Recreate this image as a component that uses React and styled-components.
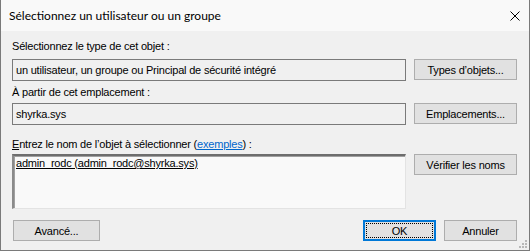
import React from "react";
import styled, { createGlobalStyle } from "styled-components";

const Global = createGlobalStyle`
  html, body { margin: 0; padding: 0; background: #f0f0f0; }
  * { box-sizing: border-box; }
`;

const Window = styled.div`
  width: 530px;
  height: 251px;
  display: flex;
  flex-direction: column;
  border: 1px solid #7a7a7a;
  border-top: none;
  background: #f0f0f0;
  position: relative;
  font-family: "Liberation Sans", Arial, sans-serif;
  font-size: 11px;
  letter-spacing: -0.2px;
  color: #000;
`;

const TitleBar = styled.div`
  height: 31px;
  flex: none;
  display: flex;
  align-items: center;
  justify-content: space-between;
  padding: 0 9px 0 8px;
  background: #f9f9f9;
  font-family: Lato, "Segoe UI", sans-serif;
  font-size: 12px;
  letter-spacing: 0;
`;

const Close = styled.svg`
  width: 10px;
  height: 10px;
`;

const Body = styled.div`
  flex: 1;
  display: grid;
  grid-template-columns: 394px 103px;
  column-gap: 8px;
  padding: 9px 11px 0 11px;
  align-content: start;
`;

const Label = styled.div`
  grid-column: 1 / 3;
  height: ${(p) => p.$h}px;
  line-height: 13px;
  padding-top: ${(p) => p.$top || 0}px;
`;

const Field = styled.div`
  height: 22px;
  border: 1px solid #7a7a7a;
  background: #f0f0f0;
  padding: 0 3px;
  line-height: 20px;
  white-space: nowrap;
  overflow: hidden;
`;

const Names = styled.div`
  height: 55px;
  border-style: solid;
  border-width: 2px 1px 1px 2px;
  border-color: #6d6d6d #e3e3e3 #e3e3e3 #8a8a8a;
  box-shadow: inset 1px 1px 0 #a0a0a0;
  background: #f9f9f9;
  padding: 1px 2px;
  line-height: 13px;
`;

const Resolved = styled.span`
  text-decoration: underline;
`;

const Button = styled.button`
  height: 21px;
  width: ${(p) => p.$w || 103}px;
  margin-left: ${(p) => p.$ml || 0}px;
  border: 1px solid #adadad;
  background: #e1e1e1;
  font-family: "Liberation Sans", Arial, sans-serif;
  font-size: 11px;
  letter-spacing: -0.2px;
  color: #000;
  padding: 0;
  align-self: start;
  position: relative;
  ${(p) =>
    p.$default &&
    `
    border: 2px solid #0078d7;
    &::after {
      content: "";
      position: absolute;
      inset: 1px;
      border: 1px dotted #000;
    }
  `}
`;

const Footer = styled.div`
  grid-column: 1 / 3;
  display: flex;
  align-items: center;
  padding-top: 11px;
`;

const Spacer = styled.div`
  flex: 1;
`;

const Link = styled.a`
  color: #0066cc;
  text-decoration: underline;
`;

const Access = styled.span`
  text-decoration: underline;
`;

const Grip = styled.svg`
  position: absolute;
  right: 1px;
  bottom: 1px;
  width: 10px;
  height: 10px;
`;

export default function App() {
  return (
    <>
      <Global />
      <Window>
        <TitleBar>
          <span>Sélectionnez un utilisateur ou un groupe</span>
          <Close viewBox="0 0 10 10">
            <path d="M0.5 0.5 L9.5 9.5 M9.5 0.5 L0.5 9.5" stroke="#000" strokeWidth="1" />
          </Close>
        </TitleBar>
        <Body>
          <Label $h={19}>Sélectionnez le type de cet objet :</Label>
          <Field>un utilisateur, un groupe ou Principal de sécurité intégré</Field>
          <Button>Types d’objets...</Button>
          <Label $h={22} $top={5}>À partir de cet emplacement :</Label>
          <Field>shyrka.sys</Field>
          <Button>Emplacements...</Button>
          <Label $h={29} $top={13}>
            <Access>E</Access>ntrez le nom de l’objet à sélectionner (<Link>exemples</Link>) :
          </Label>
          <Names>
            <Resolved>admin_rodc (admin_rodc@shyrka.sys)</Resolved>
          </Names>
          <Button>Vérifier les noms</Button>
          <Footer>
            <Button $w={87} $ml={1}>Avancé...</Button>
            <Spacer />
            <Button $w={73} $default>OK</Button>
            <Button $w={73} $ml={8}>Annuler</Button>
          </Footer>
        </Body>
        <Grip viewBox="0 0 10 10">
          {[[8, 2], [8, 5], [5, 5], [8, 8], [5, 8], [2, 8]].map(([x, y], i) => (
            <rect key={i} x={x - 1} y={y - 1} width="2" height="2" fill="#b8b8b8" />
          ))}
        </Grip>
      </Window>
    </>
  );
}
